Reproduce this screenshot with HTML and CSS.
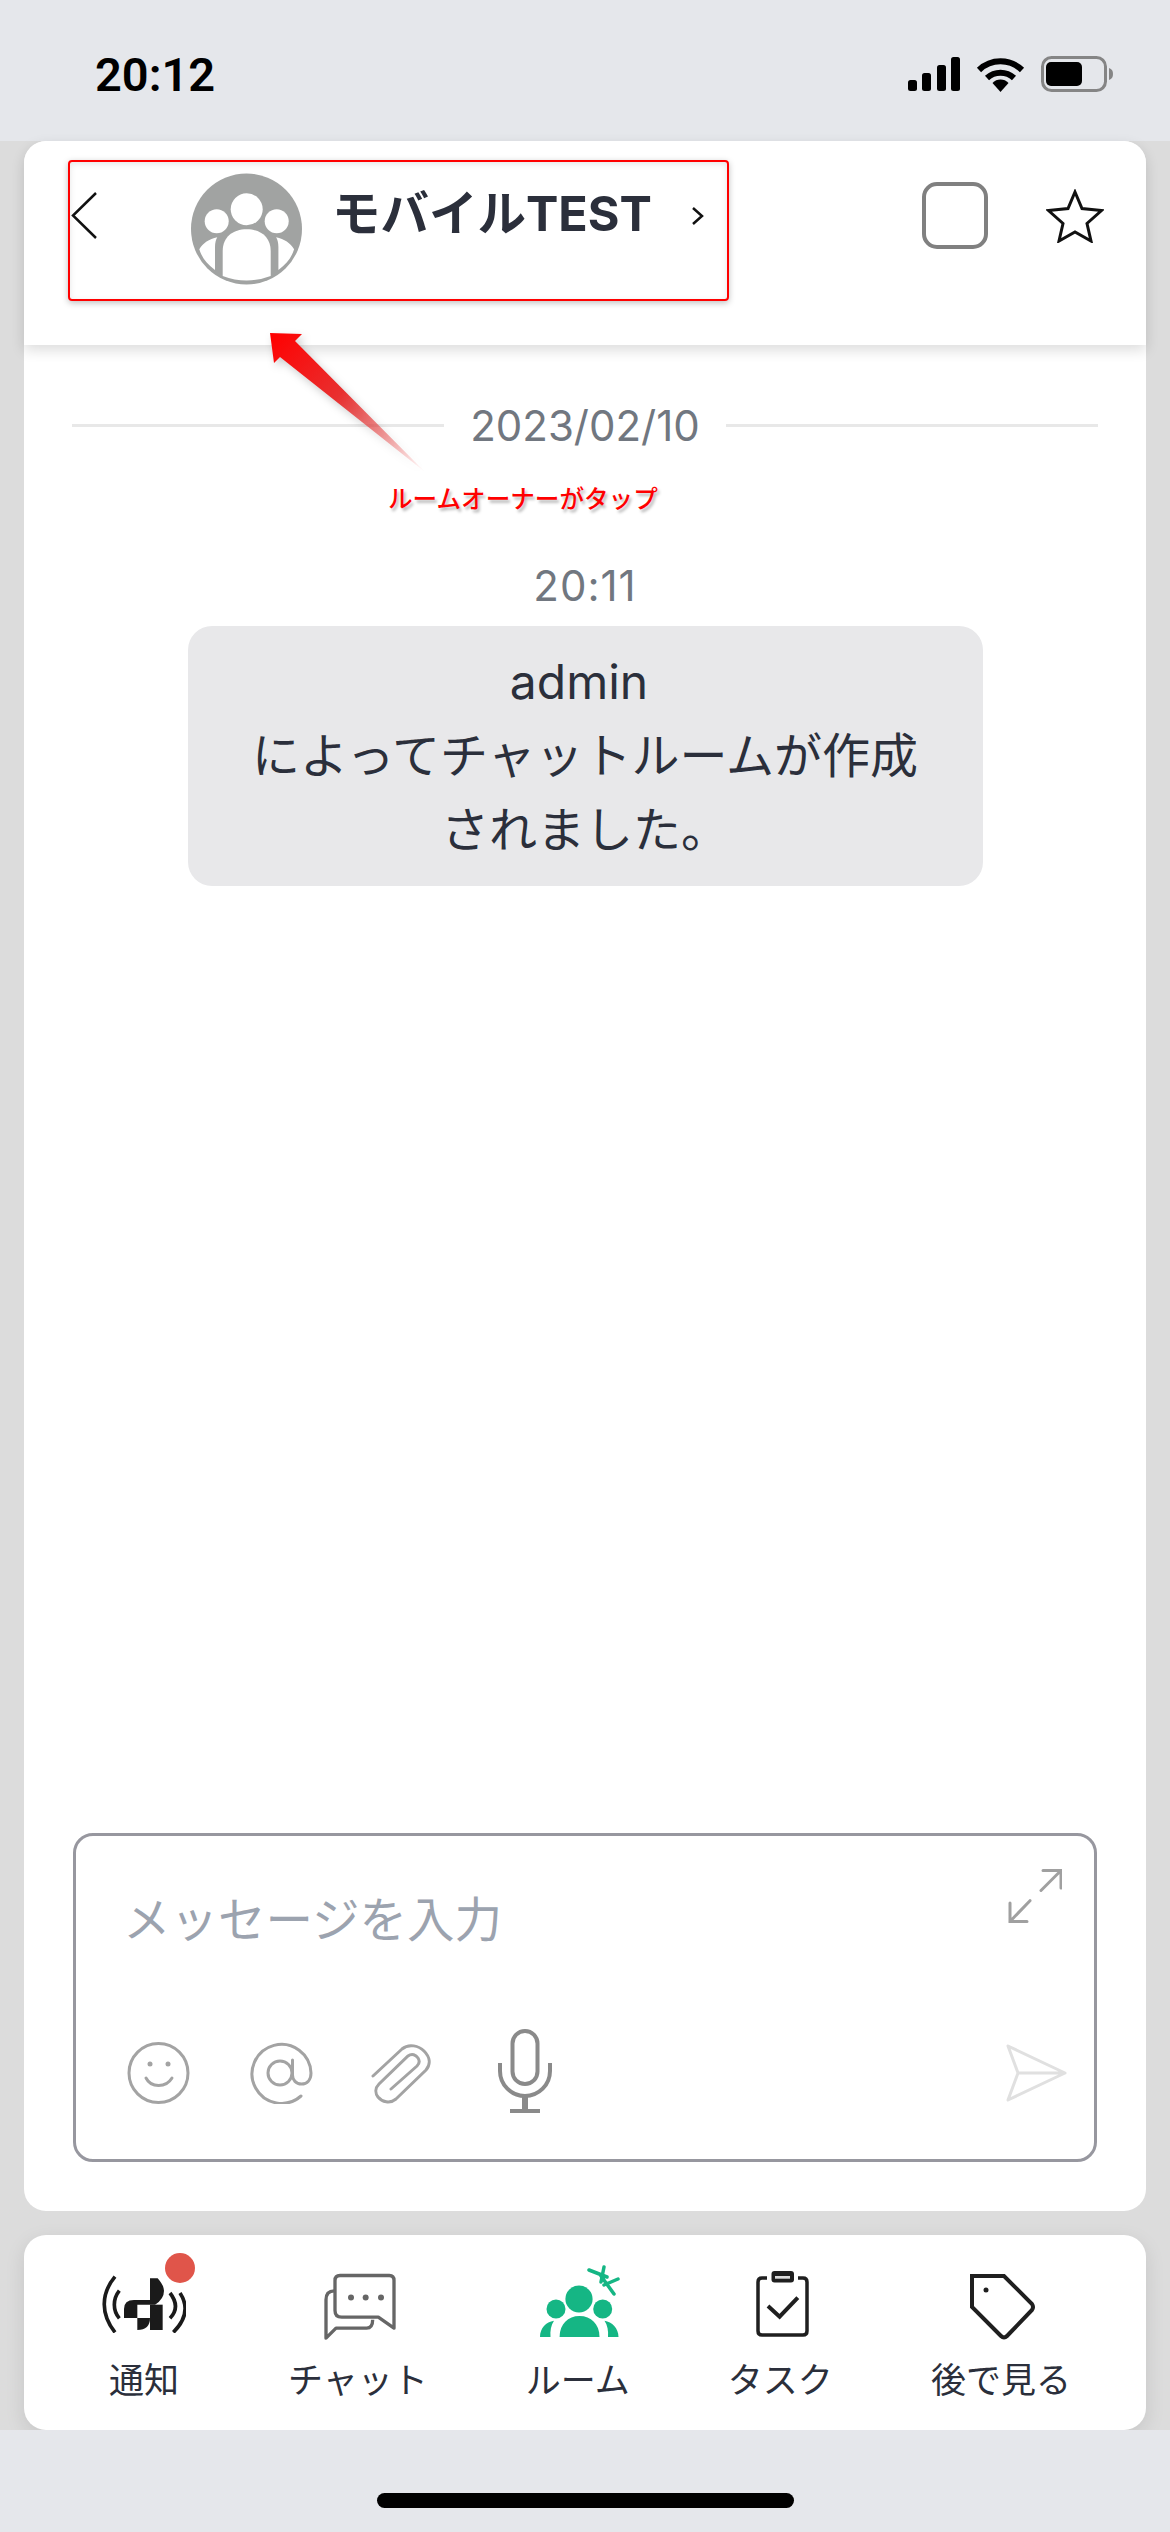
FILE: index.html
```html
<!DOCTYPE html>
<html lang="ja">
<head>
    <meta charset="UTF-8">
    <meta name="viewport" content="width=device-width, initial-scale=1.0">
    <title>モバイルTEST</title>
    <link rel="stylesheet" href="styles.css">
</head>
<body>
    <div class="screen">
        <div class="status-bar">
            <div class="clock">20:12</div>
            <div class="status-icons">
                <svg width="52" height="34" viewBox="0 0 52 34"><rect x="0" y="23" width="9" height="11" rx="2.5"/><rect x="14" y="16" width="9" height="18" rx="2.5"/><rect x="29" y="8" width="9" height="26" rx="2.5"/><rect x="43" y="0" width="9" height="34" rx="2.5"/></svg>
                <svg width="49" height="36" viewBox="0 0 49 36"><path d="M3 14A31 31 0 0 1 46 14M11 22A20 20 0 0 1 38 22" fill="none" stroke="#000" stroke-width="6"/><path d="M24.5 36L16.5 27A11 11 0 0 1 32.5 27Z"/></svg>
                <svg width="72" height="36" viewBox="0 0 72 36"><rect x="1.5" y="1.5" width="63" height="33" rx="9" fill="none" stroke="#858585" stroke-width="3"/><rect x="5" y="6" width="36" height="24" rx="5"/><path d="M68 12C71 13 72 15 72 18S71 23 68 24Z" fill="#858585"/></svg>
            </div>
        </div>

        <div class="content">
            <div class="room-card">
                <div class="room-header">
                    <svg class="back-icon" width="26" height="47" viewBox="0 0 26 47"><path d="M25 1L2 23.5L25 46" fill="none" stroke="#111" stroke-width="2.5"/></svg>
                    <svg class="avatar" width="111" height="112" viewBox="0 0 111 112">
                        <circle cx="55.5" cy="56" r="55.5" fill="#a1a3a2"/>
                        <g fill="#fff">
                            <circle cx="55.7" cy="36.3" r="16"/>
                            <circle cx="25.7" cy="48.3" r="12"/>
                            <circle cx="85.7" cy="48.3" r="12"/>
                            <path d="M31.7 103V78C31.7 64 42 56.3 55.7 56.3S79.7 64 79.7 78V103Q55.7 112 31.7 103Z"/>
                            <path d="M26.3 64.3C18 66 12 70 8.3 76.3C11 85 16 91 24 97V74C24 70 25 66 26.3 64.3Z"/>
                            <path d="M85.1 64.3C93.4 66 99.4 70 103.1 76.3C100.4 85 95.4 91 87.4 97V74C87.4 70 86.4 66 85.1 64.3Z"/>
                        </g>
                    </svg>
                    <div class="room-name">モバイルTEST</div>
                    <svg class="next-icon" width="13" height="18" viewBox="0 0 13 18"><path d="M2 1L11 9L2 17" fill="none" stroke="#111" stroke-width="2.5"/></svg>
                    <div class="check-box"></div>
                    <svg class="star-icon" width="58" height="54" viewBox="0 0 58 54"><path d="M29 3L36 19.5L55.5 21.5L41 34.5L45 52L29 43L13 52L17 34.5L2.5 21.5L22 19.5Z" fill="none" stroke="#111" stroke-width="3" stroke-linejoin="miter"/></svg>
                </div>

                <div class="chat-body">
                    <div class="date-row">
                        <div class="date-line"></div>
                        <div class="date-text">2023/02/10</div>
                        <div class="date-line"></div>
                    </div>
                    <div class="msg-time">20:11</div>
                    <div class="system-msg"><span class="msg-user">admin</span><br>によってチャットルームが作成<br>されました。</div>
                </div>

                <div class="composer">
                    <div class="composer-top">
                        <div class="placeholder">メッセージを入力</div>
                        <svg width="54" height="54" viewBox="0 0 54 54" fill="none" stroke="#a0a0a0" stroke-width="3" stroke-linecap="round"><path d="M35 1.5H53V19M53 1.5L33 21.5M2 34V52.5H19M2 52.5L22 31.7"/></svg>
                    </div>
                    <div class="composer-tools">
                        <div class="tool-group">
                            <svg class="tool-icon" width="63" height="62" viewBox="0 0 63 62" fill="none" stroke="#a3a3a3" stroke-width="3"><circle cx="31.5" cy="31" r="29.5"/><path d="M19 36C24 46 39 46 45 36" stroke-linecap="round"/><circle cx="23" cy="22" r="2.5" fill="#a3a3a3" stroke="none"/><circle cx="41" cy="22" r="2.5" fill="#a3a3a3" stroke="none"/></svg>
                            <svg class="tool-icon" width="63" height="62" viewBox="0 0 63 62" fill="none" stroke="#a3a3a3" stroke-width="3" stroke-linecap="round"><path d="M51 54A29.5 29.5 0 1 1 61 31C61 38 57 42 51.5 42C46 42 42.5 38 42.5 33V18"/><circle cx="30" cy="31" r="12"/></svg>
                            <svg class="tool-icon clip-icon" width="60" height="60" viewBox="0 0 60 60" fill="none" stroke="#a3a3a3" stroke-width="3" stroke-linecap="round"><path d="M2 32L31 5C38 -1 48 2 53 7C59 13 60 20 55 26L25 55C19 60 11 58 7 53C4 49 4 44 8 40L37 12C41 9 45 11 47 14C49 17 48 20 46 22L20 45"/></svg>
                            <svg class="mic-icon" width="54" height="84" viewBox="0 0 54 84" fill="none" stroke="#8a8a8a" stroke-width="4"><rect x="14.5" y="2" width="25" height="53" rx="12.5"/><path d="M2 34V42A25 25 0 0 0 52 42V34"/><path d="M27 67V81" stroke-width="6"/><path d="M12 82H42" stroke-width="4"/></svg>
                        </div>
                        <svg class="tool-icon send-icon" width="61" height="58" viewBox="0 0 61 58" fill="none" stroke="#e0e0e0" stroke-width="3" stroke-linejoin="round"><path d="M2 2L59 29L2 56L12 29ZM12 29H59"/></svg>
                    </div>
                </div>
            </div>

            <div class="tab-bar">
                <div class="tab">
                    <div class="tab-icon">
                        <svg width="84" height="58" viewBox="126 133 252 174">
                            <path d="M165 138C122 190 122 250 165 305M178 180C158 205 158 240 178 263M330 187C352 215 352 240 330 263M360 187C385 225 380 265 340 305" fill="none" stroke="#1a1a1a" stroke-width="11"/>
                            <path d="M192 262V235Q192 208 222 208H270V143H293Q312 165 312 180Q312 205 285 222H232V262Z" fill="#1a1a1a"/>
                            <path d="M270 222H308V298H270Z" fill="#1a1a1a"/>
                            <path d="M232 262H270Q270 298 232 298Z" fill="#1a1a1a"/>
                        </svg>
                        <span class="badge"></span>
                    </div>
                    <div class="tab-label">通知</div>
                </div>
                <div class="tab tab-chat">
                    <div class="tab-icon icon-shift">
                        <svg class="icon-low" width="72" height="67" viewBox="972 160 216 200" fill="none" stroke="#666" stroke-width="10" stroke-linejoin="round">
                            <path d="M1005 182Q1005 167 1020 167H1168Q1182 167 1182 182V325L1135 292H1025Q1005 292 1005 272Z"/>
                            <path d="M1003 213Q978 213 978 240V355L1008 325H1100Q1118 325 1118 300"/>
                            <circle cx="1053" cy="233" r="9" fill="#666" stroke="none"/>
                            <circle cx="1097" cy="233" r="9" fill="#666" stroke="none"/>
                            <circle cx="1143" cy="233" r="9" fill="#666" stroke="none"/>
                        </svg>
                    </div>
                    <div class="tab-label">チャット</div>
                </div>
                <div class="tab">
                    <div class="tab-icon icon-shift">
                        <svg class="icon-high" width="80" height="74" viewBox="0 0 80 74">
                            <g fill="#15b684">
                                <ellipse cx="39" cy="35" rx="13.6" ry="13.4"/>
                                <circle cx="16" cy="45" r="9.5"/>
                                <circle cx="62.7" cy="45" r="9.5"/>
                                <path d="M19.6 73C19.6 60 28 52 39.5 52S59.5 60 59.5 73Z"/>
                                <path d="M0 73C0 64 6 58 14 56.7C11 61 10 67 10.5 73Z"/>
                                <path d="M64.5 56.7C72 58 78.5 64 78.5 73H68C68.5 67 67.5 61 64.5 56.7Z"/>
                            </g>
                            <path d="M49 6L67 13M64 3L61 18M64 21L78 15M61 12L74 30" fill="none" stroke="#15b684" stroke-width="3.5" stroke-linecap="round"/>
                        </svg>
                    </div>
                    <div class="tab-label">ルーム</div>
                </div>
                <div class="tab">
                    <div class="tab-icon icon-shift">
                        <svg width="53" height="66" viewBox="0 0 53 66" fill="none" stroke="#1f1f1f" stroke-width="3.5">
                            <path d="M11 7H6Q2 7 2 11V60Q2 64 6 64H47Q51 64 51 60V11Q51 7 47 7H42"/>
                            <rect x="15.5" y="0" width="22.5" height="11.5" rx="3" fill="#1f1f1f" stroke="none"/>
                            <rect x="19" y="5" width="15" height="2.7" fill="#ddd" stroke="none"/>
                            <path d="M12 35L23.6 45.7L41.8 26.7" stroke-width="4"/>
                        </svg>
                    </div>
                    <div class="tab-label">タスク</div>
                </div>
                <div class="tab">
                    <div class="tab-icon icon-shift">
                        <svg class="icon-low" width="66" height="66" viewBox="0 0 66 66" fill="none" stroke="#1f1f1f" stroke-width="4" stroke-linejoin="round">
                            <path d="M2 2H34L62 30Q64 33 62 36L37 62Q34 65 31 62L2 33Z" stroke-linejoin="miter"/>
                            <circle cx="16" cy="16" r="2.5" fill="#1f1f1f" stroke="none"/>
                        </svg>
                    </div>
                    <div class="tab-label">後で見る</div>
                </div>
            </div>
        </div>

        <div class="home-area">
            <div class="home-bar"></div>
        </div>

        <!-- annotation drawn over the screenshot -->
        <div class="note-box"></div>
        <svg class="note-arrow" width="160" height="144" viewBox="0 0 160 144">
            <defs>
                <linearGradient id="arrowFade" gradientUnits="userSpaceOnUse" x1="2" y1="2" x2="157" y2="141">
                    <stop offset="0" stop-color="#ff0000"/>
                    <stop offset="0.45" stop-color="#e83030"/>
                    <stop offset="1" stop-color="#e83030" stop-opacity="0"/>
                </linearGradient>
            </defs>
            <path d="M2 2L34 3L27 10L157 141L12 26L6 32Z" fill="url(#arrowFade)"/>
        </svg>
        <div class="note-text">ルームオーナーがタップ</div>
    </div>
</body>
</html>
```

FILE: styles.css
```css
:root {
    --bg: #e5e7eb;
    --dim: #dcdcdc;
    --text: #2b2f3b;
    --muted: #717780;
    --border: #97979f;
    --red: #ff0000;
}

* {
    box-sizing: border-box;
}

body {
    margin: 0;
    background: var(--bg);
    color: var(--text);
    font-family: Inter, "Noto Sans CJK JP", sans-serif;
}

svg {
    display: block;
    flex-shrink: 0;
}

.screen {
    position: relative;
    display: flex;
    flex-direction: column;
    width: 1170px;
    height: 2532px;
    overflow: hidden;
}

/* status bar */
.status-bar {
    display: flex;
    justify-content: space-between;
    align-items: center;
    height: 141px;
    padding: 7px 57px 0 95px;
    background: var(--bg);
}

.clock {
    font-family: Roboto, sans-serif;
    font-size: 47px;
    font-weight: 600;
    color: #000;
}

.status-icons {
    display: flex;
    align-items: center;
    gap: 16px;
}

/* main area */
.content {
    display: flex;
    flex-direction: column;
    gap: 24px;
    height: 2289px;
    padding: 0 24px;
    background: var(--dim);
}

.room-card {
    display: flex;
    flex-direction: column;
    height: 2070px;
    background: #fff;
    border-radius: 22px;
}

.room-header {
    display: flex;
    align-items: flex-start;
    flex-shrink: 0;
    height: 204px;
    background: #fff;
    border-radius: 22px 22px 0 0;
    box-shadow: 0 5px 14px rgba(0, 0, 0, 0.14);
}

.back-icon {
    margin: 51px 0 0 47px;
}

.avatar {
    margin: 32px 0 0 94px;
}

.room-name {
    margin: 41px 0 0 30px;
    font-size: 48.5px;
    line-height: 64px;
    font-weight: 700;
    white-space: nowrap;
}

.next-icon {
    margin: 66px 0 0 39px;
}

.check-box {
    width: 66px;
    height: 67px;
    margin: 41px 0 0 218px;
    border: 4px solid #808080;
    border-radius: 15px;
}

.star-icon {
    margin: 48px 0 0 58px;
}

/* messages */
.chat-body {
    flex: 1;
    display: flex;
    flex-direction: column;
    align-items: center;
    padding: 55px 48px 0;
}

.date-row {
    display: flex;
    align-items: center;
    gap: 26px;
    width: 100%;
    height: 50px;
}

.date-line {
    flex: 1;
    height: 3px;
    background: #e8e8e8;
}

.date-text {
    font-size: 42px;
    color: var(--muted);
}

.msg-time {
    margin-top: 111px;
    font-size: 42px;
    line-height: 50px;
    letter-spacing: 1px;
    color: var(--muted);
}

.system-msg {
    width: 795px;
    margin-top: 15px;
    padding: 19px 40px;
    background: #e8e8ea;
    border-radius: 24px;
    font-size: 48px;
    line-height: 74px;
    text-align: center;
}

.msg-user {
    margin-right: 12px;
}

/* input box */
.composer {
    display: flex;
    flex-direction: column;
    justify-content: space-between;
    flex-shrink: 0;
    height: 329px;
    margin: 0 49px 49px;
    border: 3px solid var(--border);
    border-radius: 20px;
}

.composer-top {
    display: flex;
    justify-content: space-between;
    align-items: flex-start;
    padding: 33px 32px 0 47px;
}

.placeholder {
    margin-top: 21px;
    font-size: 47.5px;
    line-height: 60px;
    color: #9ca3af;
}

.composer-tools {
    display: flex;
    justify-content: space-between;
    align-items: flex-end;
    padding: 0 27px 46px 51px;
}

.tool-group {
    display: flex;
    align-items: flex-end;
    gap: 60px;
}

.tool-icon {
    margin-bottom: 9px;
}

.clip-icon {
    margin-left: -2px;
}

.mic-icon {
    margin-left: 7px;
}

.send-icon {
    margin-bottom: 11px;
}

/* bottom tabs */
.tab-bar {
    display: flex;
    justify-content: space-between;
    height: 195px;
    padding: 29px 75px 0 78px;
    background: #fff;
    border-radius: 22px;
    box-shadow: 0 6px 20px rgba(0, 0, 0, 0.1);
}

.tab {
    display: flex;
    flex-direction: column;
    align-items: center;
}

.tab-chat {
    margin-left: 4px;
}

.tab-icon {
    position: relative;
    display: flex;
    align-items: center;
    justify-content: center;
    height: 80px;
}

.icon-shift {
    padding-left: 4px;
}

.icon-low {
    margin-top: 5px;
}

.icon-high {
    margin-bottom: 6px;
}

.badge {
    position: absolute;
    top: -11px;
    left: 63px;
    width: 30px;
    height: 30px;
    background: #e0554a;
    border-radius: 50%;
}

.tab-label {
    margin-top: 14px;
    font-size: 35px;
    line-height: 44px;
    white-space: nowrap;
}

/* home indicator */
.home-area {
    flex: 1;
    display: flex;
    justify-content: center;
    padding-top: 63px;
    background: var(--bg);
}

.home-bar {
    width: 417px;
    height: 15px;
    background: #000;
    border-radius: 8px;
}

/* red annotation */
.note-box {
    position: absolute;
    left: 68px;
    top: 160px;
    width: 661px;
    height: 141px;
    border: 2px solid var(--red);
    border-radius: 4px;
    box-shadow: 0 2px 6px rgba(0, 0, 0, 0.25), inset 0 2px 6px rgba(0, 0, 0, 0.1);
}

.note-arrow {
    position: absolute;
    left: 268px;
    top: 331px;
    filter: drop-shadow(3px 4px 4px rgba(0, 0, 0, 0.2));
}

.note-text {
    position: absolute;
    left: 388px;
    top: 482px;
    font-size: 24.6px;
    font-weight: 500;
    line-height: 34px;
    color: var(--red);
    text-shadow: 2px 3px 3px rgba(0, 0, 0, 0.28);
    white-space: nowrap;
}
```
